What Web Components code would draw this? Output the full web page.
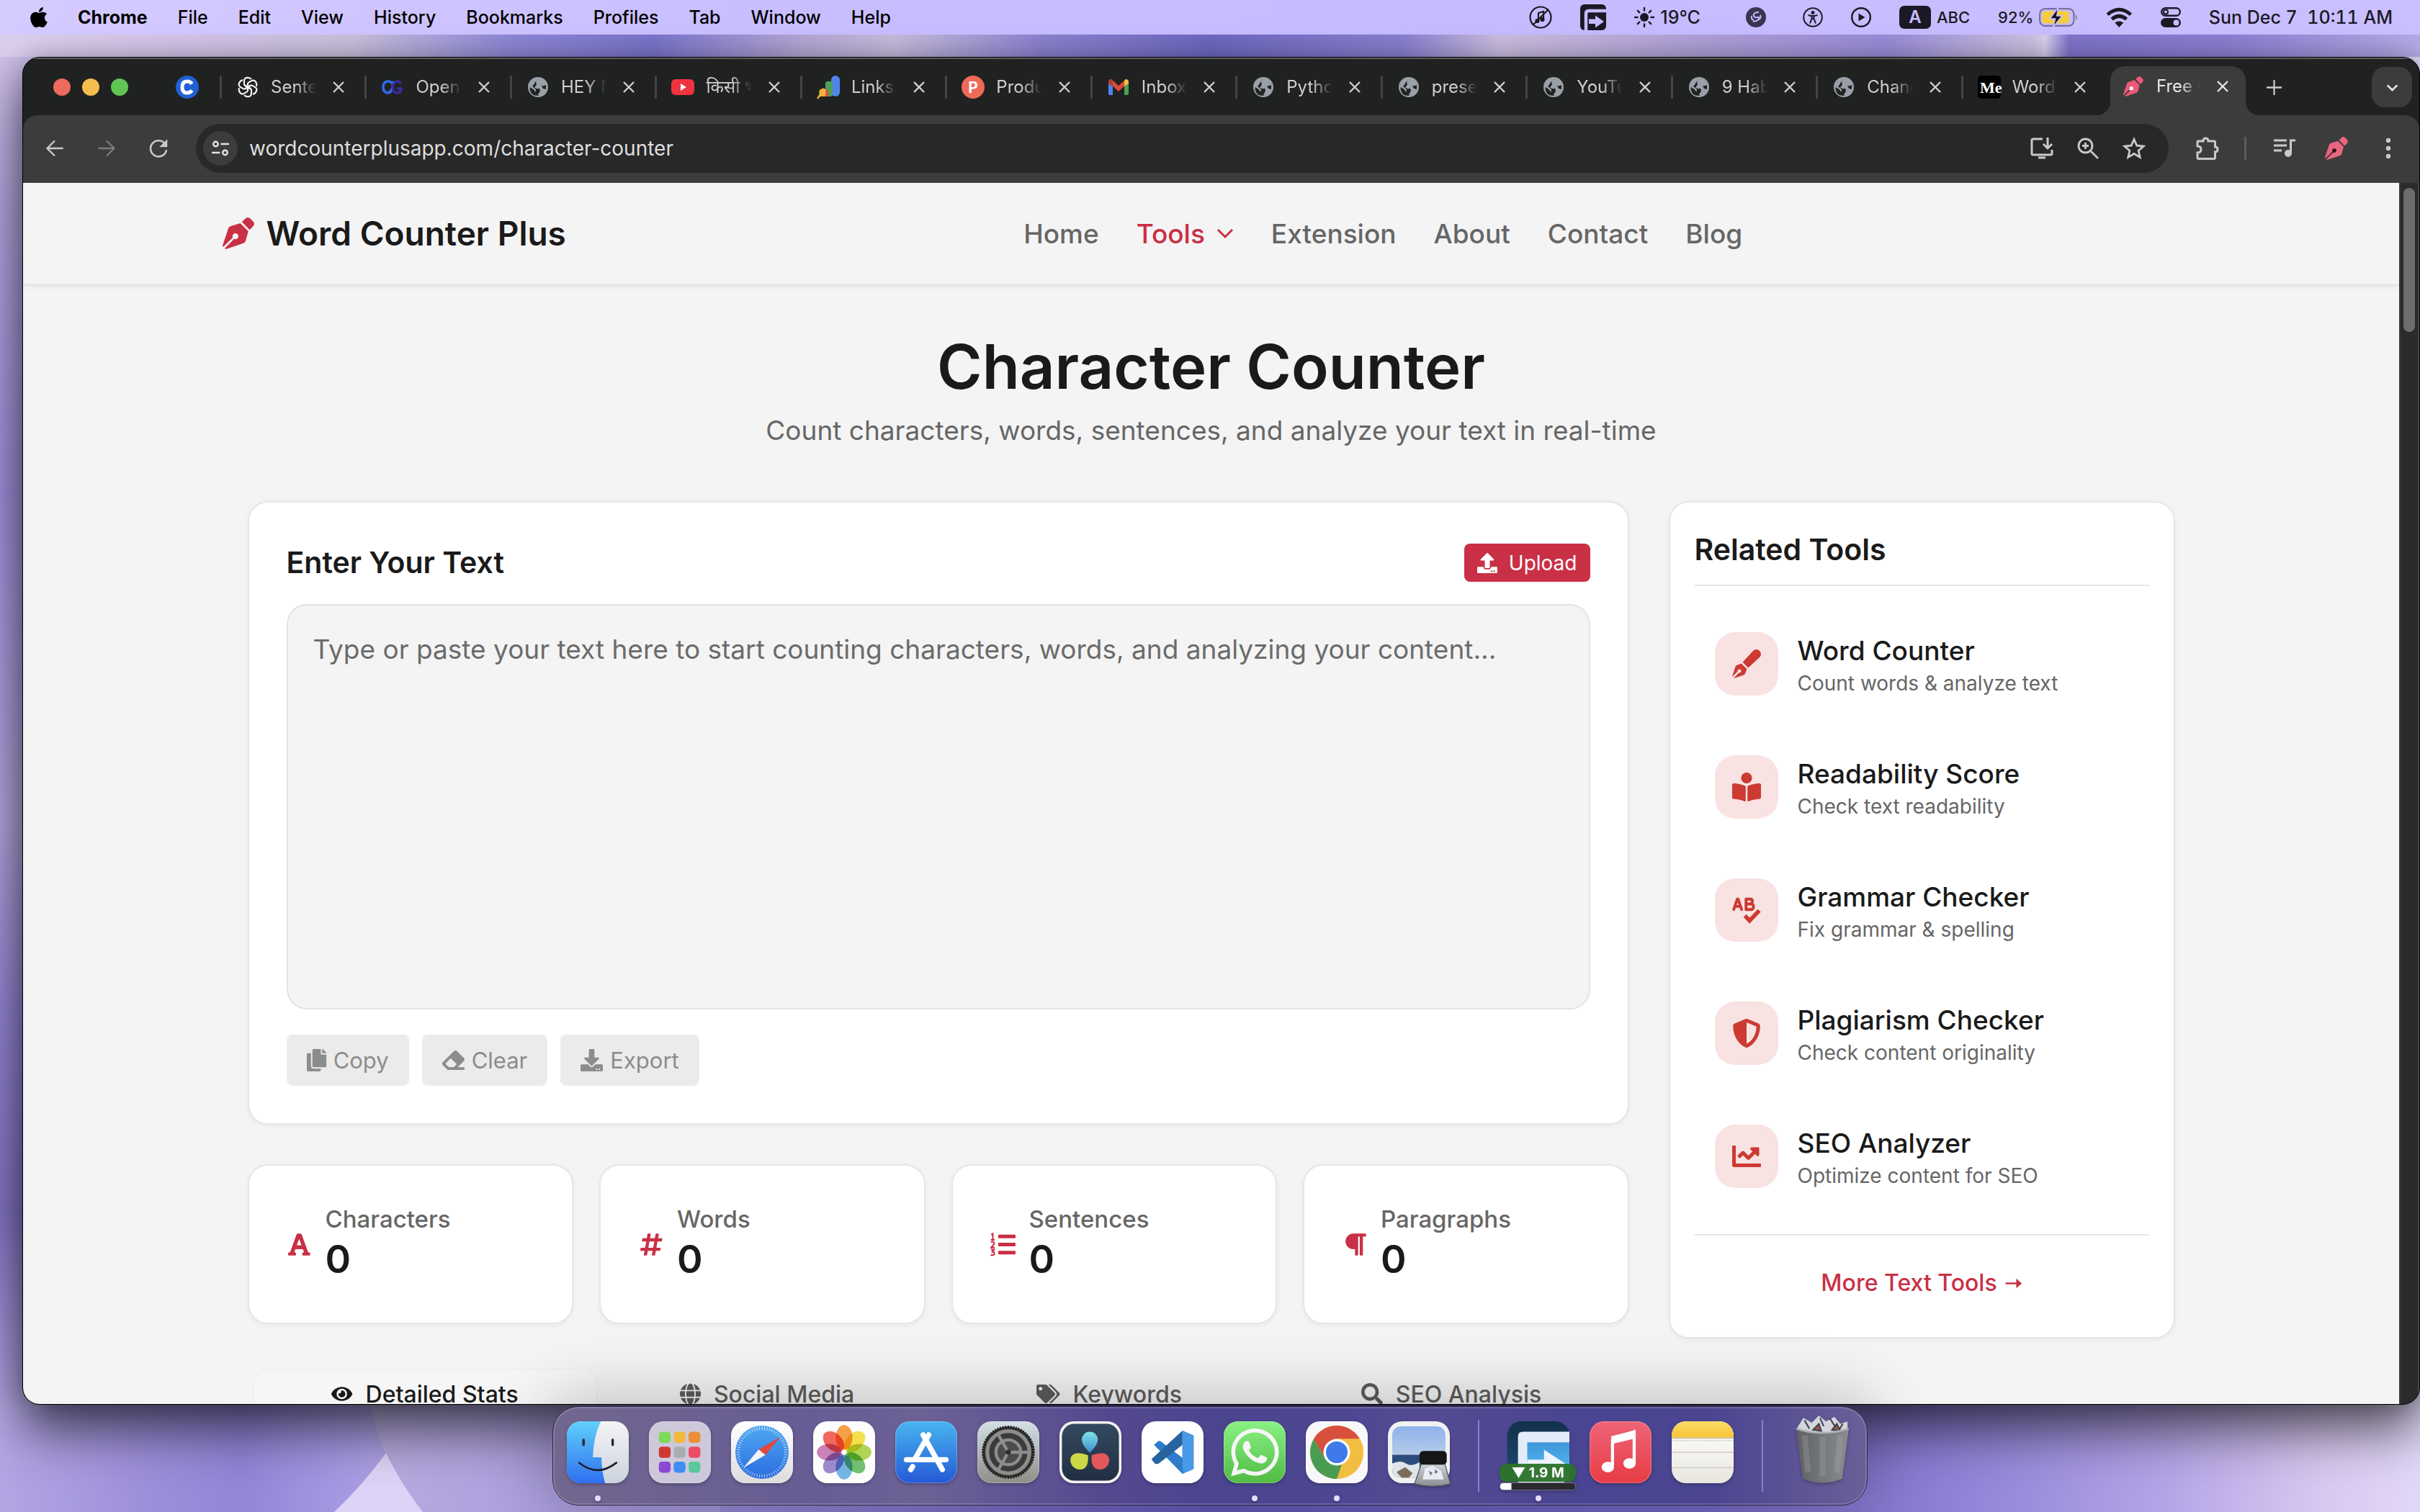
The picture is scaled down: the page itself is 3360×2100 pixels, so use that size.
<!DOCTYPE html>
<html lang="en">
<head>
<meta charset="utf-8">
<title>Free Character Counter</title>
<style>
  html, body { height: 100%; margin: 0; }
  body { font-family: Inter, "Noto Sans", sans-serif; overflow: hidden; }
</style>
</head>
<body>
<mac-desktop>
  <mac-menubar slot="menubar"></mac-menubar>
  <browser-window slot="window">
    <browser-tab slot="tabs" icon="openai">Sentence</browser-tab>
    <browser-tab slot="tabs" icon="og">OpenG</browser-tab>
    <browser-tab slot="tabs" icon="planet">HEY N</browser-tab>
    <browser-tab slot="tabs" icon="youtube">किसी भी</browser-tab>
    <browser-tab slot="tabs" icon="analytics">Links</browser-tab>
    <browser-tab slot="tabs" icon="producthunt">Product</browser-tab>
    <browser-tab slot="tabs" icon="gmail">Inbox (</browser-tab>
    <browser-tab slot="tabs" icon="planet">Python</browser-tab>
    <browser-tab slot="tabs" icon="planet">presen</browser-tab>
    <browser-tab slot="tabs" icon="planet">YouTub</browser-tab>
    <browser-tab slot="tabs" icon="planet">9 Habit</browser-tab>
    <browser-tab slot="tabs" icon="planet">Chang</browser-tab>
    <browser-tab slot="tabs" icon="medium">Word C</browser-tab>
    <browser-tab slot="active" icon="penpink" active>Free C</browser-tab>

    <site-page>
      <site-header slot="header"></site-header>
      <text-editor slot="main"></text-editor>
      <stat-row slot="main">
        <stat-card icon="font" label="Characters">0</stat-card>
        <stat-card icon="hash" label="Words">0</stat-card>
        <stat-card icon="listol" label="Sentences">0</stat-card>
        <stat-card icon="para" label="Paragraphs">0</stat-card>
      </stat-row>
      <analysis-tabs slot="main"></analysis-tabs>
      <related-tools slot="side">
        <tool-link icon="penfancy" label="Word Counter">Count words &amp; analyze text</tool-link>
        <tool-link icon="reader" label="Readability Score">Check text readability</tool-link>
        <tool-link icon="spell" label="Grammar Checker">Fix grammar &amp; spelling</tool-link>
        <tool-link icon="shield" label="Plagiarism Checker">Check content originality</tool-link>
        <tool-link icon="chart" label="SEO Analyzer">Optimize content for SEO</tool-link>
      </related-tools>
    </site-page>
  </browser-window>
  <mac-dock slot="dock">
    <dock-app icon="finder" running></dock-app>
    <dock-app icon="launchpad"></dock-app>
    <dock-app icon="safari"></dock-app>
    <dock-app icon="photos"></dock-app>
    <dock-app icon="appstore"></dock-app>
    <dock-app icon="settings"></dock-app>
    <dock-app icon="resolve"></dock-app>
    <dock-app icon="vscode"></dock-app>
    <dock-app icon="whatsapp" running></dock-app>
    <dock-app icon="chrome" running></dock-app>
    <dock-app icon="preview"></dock-app>
    <dock-rule></dock-rule>
    <dock-app icon="downloader" running badge="1.9 M"></dock-app>
    <dock-app icon="music"></dock-app>
    <dock-app icon="notes"></dock-app>
    <dock-rule></dock-rule>
    <dock-app icon="trash"></dock-app>
  </mac-dock>
</mac-desktop>

<script>
const svg = (box, body, extra = '') => `<svg viewBox="${box}" ${extra}>${body}</svg>`;
const fa = (w, d) => svg(`0 0 ${w} 512`, `<path fill="currentColor" d="${d}"/>`);
const line = (box, body, w = 2) => svg(box, `<g fill="none" stroke="currentColor" stroke-width="${w}">${body}</g>`);
const PEN = 'M368.4 18.3L312.7 74.1 437.9 199.3l55.7-55.7c21.9-21.9 21.9-57.3 0-79.2L447.6 18.3c-21.9-21.9-57.3-21.9-79.2 0zM288 94.6l-9.2 2.8L134.7 140.6c-19.9 6-35.7 21.2-42.3 41L3.8 445.8c-3.8 11.3-1 23.9 7.3 32.4L164.7 324.7c-3-6.3-4.7-13.3-4.7-20.7c0-26.5 21.5-48 48-48s48 21.5 48 48s-21.5 48-48 48c-7.4 0-14.4-1.7-20.7-4.7L33.7 500.9c8.6 8.3 21.1 11.2 32.4 7.3l264.3-88.6c19.7-6.6 35-22.4 41-42.3l43.2-144.1 2.8-9.2L288 94.6z';
const tile = (fill, body, defs = '') => svg('0 0 100 100', `<defs>${defs}</defs><rect width="100" height="100" rx="23" fill="${fill}"/>${body}<rect x=".8" y=".8" width="98.4" height="98.4" rx="22.4" fill="none" stroke="#fff" stroke-opacity=".25" stroke-width="1.2"/>`);
const grad = (id, a, b, dir = 'x1="0" y1="0" x2="0" y2="1"') => `<linearGradient id="${id}" ${dir}><stop stop-color="${a}"/><stop offset="1" stop-color="${b}"/></linearGradient>`;
const ring = (n, cx, cy, r1, r2, attrs) => Array.from({length: n}, (_, i) => {
  const a = i * 2 * Math.PI / n, c = Math.cos(a), s = Math.sin(a);
  return `<path d="M${cx + r1 * c} ${cy + r1 * s}L${cx + r2 * c} ${cy + r2 * s}" ${attrs}/>`;
}).join('');

const ICONS = {
  pen: fa(512, PEN),
  penpink: svg('0 0 512 512', `<circle cx="208" cy="304" r="60" fill="#fff"/><path fill="#ea5a78" d="${PEN}"/>`),
  upload: fa(512, 'M296 384h-80c-13.3 0-24-10.7-24-24V192h-87.7c-17.8 0-26.7-21.5-14.1-34.1L242.3 5.7c7.5-7.5 19.8-7.5 27.3 0l152.2 152.2c12.6 12.6 3.7 34.1-14.1 34.1H320v168c0 13.3-10.7 24-24 24zm216-8v112c0 13.3-10.7 24-24 24H24c-13.3 0-24-10.7-24-24V376c0-13.3 10.7-24 24-24h136v8c0 30.9 25.1 56 56 56h80c30.9 0 56-25.1 56-56v-8h136c13.3 0 24 10.7 24 24zm-124 88c0-11-9-20-20-20s-20 9-20 20 9 20 20 20 20-9 20-20zm64 0c0-11-9-20-20-20s-20 9-20 20 9 20 20 20 20-9 20-20z'),
  download: fa(512, 'M216 0h80c13.3 0 24 10.7 24 24v168h87.7c17.8 0 26.7 21.5 14.1 34.1L269.7 378.3c-7.5 7.5-19.8 7.5-27.3 0L90.1 226.1c-12.6-12.6-3.7-34.1 14.1-34.1H192V24c0-13.3 10.7-24 24-24zm296 376v112c0 13.3-10.7 24-24 24H24c-13.3 0-24-10.7-24-24V376c0-13.3 10.7-24 24-24h146.7l49 49c20.1 20.1 52.5 20.1 72.6 0l49-49H488c13.3 0 24 10.7 24 24zm-124 88c0-11-9-20-20-20s-20 9-20 20 9 20 20 20 20-9 20-20zm64 0c0-11-9-20-20-20s-20 9-20 20 9 20 20 20 20-9 20-20z'),
  copy: fa(448, 'M320 448v40c0 13.255-10.745 24-24 24H24c-13.255 0-24-10.745-24-24V120c0-13.255 10.745-24 24-24h72v296c0 30.879 25.121 56 56 56h168zm0-344V0H152c-13.255 0-24 10.745-24 24v368c0 13.255 10.745 24 24 24h272c13.255 0 24-10.745 24-24V128H344c-13.2 0-24-10.8-24-24zm120.971-31.029L375.029 7.029A24 24 0 0 0 358.059 0H352v96h96v-6.059a24 24 0 0 0-7.029-16.97z'),
  eraser: fa(512, 'M497.941 273.941c18.745-18.745 18.745-49.137 0-67.882l-160-160c-18.745-18.745-49.136-18.746-67.883 0l-256 256c-18.745 18.745-18.745 49.137 0 67.882l96 96A48.004 48.004 0 0 0 144 480h356c6.627 0 12-5.373 12-12v-40c0-6.627-5.373-12-12-12H355.883l142.058-142.059zm-302.627-62.627l137.373 137.373L265.373 416H150.628l-80-80 124.686-124.686z'),
  hash: fa(448, 'M440.667 182.109l7.143-40c1.313-7.355-4.342-14.109-11.813-14.109h-74.81l14.623-81.891C377.123 38.754 371.468 32 363.997 32h-40.632a12 12 0 0 0-11.813 9.891L296.175 128H197.54l14.623-81.891C213.477 38.754 207.822 32 200.35 32h-40.632a12 12 0 0 0-11.813 9.891L132.528 128H53.432a12 12 0 0 0-11.813 9.891l-7.143 40C33.163 185.246 38.818 192 46.289 192h74.81L98.242 320H19.146a12 12 0 0 0-11.813 9.891l-7.143 40C-1.123 377.246 4.532 384 12.003 384h74.81L72.19 465.891C70.877 473.246 76.532 480 84.003 480h40.632a12 12 0 0 0 11.813-9.891L151.826 384h98.634l-14.623 81.891C234.523 473.246 240.178 480 247.65 480h40.632a12 12 0 0 0 11.813-9.891L315.472 384h79.096a12 12 0 0 0 11.813-9.891l7.143-40c1.313-7.355-4.342-14.109-11.813-14.109h-74.81l22.857-128h79.096a12 12 0 0 0 11.813-9.891zM261.889 320h-98.634l22.857-128h98.634l-22.857 128z'),
  font: fa(448, 'M432 416h-23.41L277.53 53.69A32 32 0 0 0 247.58 32h-47.16a32 32 0 0 0-29.95 21.69L39.41 416H16a16 16 0 0 0-16 16v32a16 16 0 0 0 16 16h128a16 16 0 0 0 16-16v-32a16 16 0 0 0-16-16h-19.58l23.3-64h152.56l23.3 64H304a16 16 0 0 0-16 16v32a16 16 0 0 0 16 16h128a16 16 0 0 0 16-16v-32a16 16 0 0 0-16-16zM176.85 272L224 142.51 271.15 272z'),
  listol: svg('0 0 512 512', '<g fill="currentColor"><rect x="160" y="56" width="352" height="72" rx="16"/><rect x="160" y="220" width="352" height="72" rx="16"/><rect x="160" y="384" width="352" height="72" rx="16"/></g><g fill="none" stroke="currentColor" stroke-width="30"><path d="M16 52l34-16v122M10 160h78M14 212q34-28 56 0t-8 48l-44 56h70M14 360h62l-34 44q40 0 40 34t-40 34q-20 0-34-10"/></g>'),
  para: fa(448, 'M448 48v32a16 16 0 0 1-16 16h-48v368a16 16 0 0 1-16 16h-32a16 16 0 0 1-16-16V96h-32v368a16 16 0 0 1-16 16h-32a16 16 0 0 1-16-16V352h-32a160 160 0 0 1 0-320h240a16 16 0 0 1 16 16z'),
  eye: fa(576, 'M572.52 241.4C518.29 135.59 410.93 64 288 64S57.68 135.64 3.48 241.41a32.35 32.35 0 0 0 0 29.19C57.71 376.41 165.07 448 288 448s230.32-71.64 284.52-177.41a32.35 32.35 0 0 0 0-29.19zM288 400a144 144 0 1 1 144-144 143.93 143.93 0 0 1-144 144zm0-240a95.31 95.31 0 0 0-25.31 3.79 47.85 47.85 0 0 1-66.9 66.9A95.78 95.78 0 1 0 288 160z'),
  globe: fa(496, 'M336.5 160C322 70.7 287.8 8 248 8s-74 62.7-88.5 152h177zM152 256c0 22.2 1.2 43.5 3.3 64h185.3c2.1-20.5 3.3-41.8 3.3-64s-1.2-43.5-3.3-64H155.3c-2.1 20.5-3.3 41.8-3.3 64zm324.7-96c-28.6-67.9-86.5-120.4-158-141.6 24.4 33.8 41.2 84.7 50 141.6h108zM177.2 18.4C105.8 39.6 47.8 92.1 19.3 160h108c8.7-56.9 25.5-107.8 49.9-141.6zM487.4 192H372.7c2.1 21 3.3 42.5 3.3 64s-1.2 43-3.3 64h114.6c5.5-20.5 8.6-41.8 8.6-64s-3.1-43.5-8.5-64zM120 256c0-21.5 1.2-43 3.3-64H8.6C3.2 212.5 0 233.8 0 256s3.2 43.5 8.6 64h114.6c-2-21-3.2-42.5-3.2-64zm39.5 96c14.5 89.3 48.7 152 88.5 152s74-62.7 88.5-152h-177zm159.3 141.6c71.4-21.2 129.4-73.7 158-141.6h-108c-8.8 56.9-25.6 107.8-50 141.6zM19.3 352c28.6 67.9 86.5 120.4 158 141.6-24.4-33.8-41.2-84.7-50-141.6h-108z'),
  tags: fa(640, 'M497.941 225.941L286.059 14.059A48 48 0 0 0 252.118 0H48C21.49 0 0 21.49 0 48v204.118a48 48 0 0 0 14.059 33.941l211.882 211.882c18.744 18.745 49.136 18.746 67.882 0l204.118-204.118c18.745-18.745 18.745-49.137 0-67.882zM112 160c-26.51 0-48-21.49-48-48s21.49-48 48-48 48 21.49 48 48-21.49 48-48 48zm513.941 133.823L421.823 497.941c-18.745 18.745-49.137 18.745-67.882 0l-.36-.36L527.64 323.522c16.999-16.999 26.36-39.6 26.36-63.64s-9.362-46.641-26.36-63.64L331.397 0h48.721a48 48 0 0 1 33.941 14.059l211.882 211.882c18.745 18.745 18.745 49.137 0 67.882z'),
  search: fa(512, 'M505 442.7L405.3 343c-4.5-4.5-10.6-7-17-7H372c27.6-35.3 44-79.7 44-128C416 93.1 322.9 0 208 0S0 93.1 0 208s93.1 208 208 208c48.3 0 92.7-16.4 128-44v16.3c0 6.4 2.5 12.5 7 17l99.7 99.7c9.4 9.4 24.6 9.4 33.9 0l28.3-28.3c9.4-9.4 9.4-24.6.1-34zM208 336c-70.7 0-128-57.2-128-128 0-70.7 57.2-128 128-128 70.7 0 128 57.2 128 128 0 70.7-57.2 128-128 128z'),
  penfancy: fa(512, 'M79.18 282.94a32.005 32.005 0 0 0-20.24 20.24L0 480l4.69 4.69 92.89-92.89c-.66-2.56-1.57-5.03-1.57-7.8 0-17.67 14.33-32 32-32s32 14.33 32 32-14.33 32-32 32c-2.77 0-5.24-.91-7.8-1.57l-92.89 92.89L32 512l176.82-58.94a31.983 31.983 0 0 0 20.24-20.24l33.07-84.07-98.88-98.88-84.07 33.07zM369.25 28.32L186.14 227.81l97.85 97.85 199.49-183.11C568.4 67.48 443.73-55.94 369.25 28.32z'),
  reader: fa(512, 'M352 96c0-53.02-42.98-96-96-96s-96 42.98-96 96 42.98 96 96 96 96-42.98 96-96zM233.59 241.1c-59.33-36.32-155.43-46.3-203.79-49.05C13.55 191.13 0 203.51 0 219.14v222.8c0 14.33 11.59 26.28 26.49 27.05 43.66 2.29 131.99 10.68 193.04 41.43 9.37 4.72 20.48-1.71 20.48-11.87V252.56c-.01-4.67-2.32-8.95-6.42-11.46zm248.61-49.05c-48.35 2.74-144.46 12.73-203.78 49.05-4.1 2.51-6.41 6.96-6.41 11.63v245.79c0 10.19 11.14 16.63 20.54 11.9 61.04-30.72 149.32-39.11 192.97-41.4 14.9-.78 26.49-12.73 26.49-27.06V219.14c-.01-15.63-13.56-28.01-29.81-27.09z'),
  shield: fa(512, 'M466.5 83.7l-192-80a48.15 48.15 0 0 0-36.9 0l-192 80C27.7 91.1 16 108.6 16 128c0 198.5 114.5 335.7 221.5 380.3 11.8 4.9 25.1 4.9 36.9 0C360.1 472.6 496 349.3 496 128c0-19.4-11.7-36.9-29.5-44.3zM256.1 446.3l-.1-381 175.9 73.3c-3.3 151.4-82.1 261.1-175.8 307.7z'),
  spell: svg('0 0 512 512', '<g fill="none" stroke="currentColor" stroke-width="56" stroke-linecap="round" stroke-linejoin="round"><path d="M28 246L92 60h12l64 186M56 190h84M246 60h74q40 0 40 40t-40 48h-74zM246 148h90q42 0 42 48t-42 50h-90z" stroke-width="50"/><path d="M226 356l84 88 172-180" stroke-width="72" stroke-linecap="butt" stroke-linejoin="miter"/></g>'),
  chart: fa(512, 'M496 384H64V80c0-8.84-7.16-16-16-16H16C7.16 64 0 71.16 0 80v336c0 17.67 14.33 32 32 32h464c8.84 0 16-7.16 16-16v-32c0-8.84-7.16-16-16-16zM464 96H345.94c-21.38 0-32.09 25.85-16.97 40.97l32.4 32.4L288 242.75l-73.37-73.37c-12.5-12.5-32.76-12.5-45.25 0l-68.69 68.69c-6.25 6.25-6.25 16.38 0 22.63l22.62 22.62c6.25 6.25 16.38 6.25 22.63 0L192 237.25l73.37 73.37c12.5 12.5 32.76 12.5 45.25 0l96-96 32.4 32.4c15.12 15.12 40.97 4.41 40.97-16.97V112c.01-8.84-7.15-16-15.99-16z'),
  apple: fa(384, 'M318.7 268.7c-.2-36.7 16.4-64.4 50-84.8-18.8-26.9-47.2-41.7-84.7-44.6-35.5-2.8-74.3 20.7-88.5 20.7-15 0-49.4-19.7-76.4-19.7C63.3 141.2 4 184.8 4 273.5q0 39.3 14.4 81.2c12.8 36.7 59 126.7 107.2 125.2 25.2-.6 43-17.9 75.8-17.9 31.8 0 48.3 17.9 76.4 17.9 48.6-.7 90.4-82.5 102.6-119.3-65.2-30.7-61.7-90-61.7-91.9zm-56.6-164.2c27.3-32.4 24.8-61.9 24-72.5-24.1 1.4-52 16.4-67.9 34.9-17.5 19.8-27.8 44.3-25.6 71.9 26.1 2 49.9-11.4 69.5-34.3z'),
  chevron: line('0 0 24 24', '<path d="M2 7l10 10L22 7"/>', 3),
  arrow: svg('0 0 32 32', '<path d="M2 16h22" stroke="currentColor" stroke-width="3.200"/><path d="M21 7.500l10 8.500-10 8.500z" fill="currentColor"/>'),

  back: line('0 0 24 24', '<path d="M22 12H3M12 3l-9 9 9 9"/>'),
  forward: line('0 0 24 24', '<path d="M2 12h19M12 3l9 9-9 9"/>'),
  reload: svg('0 0 24 24', '<path d="M20 7a9.500 9.500 0 1 0 1.500 7" fill="none" stroke="currentColor" stroke-width="2.200"/><path d="M22.500 1v9.500H13z" fill="currentColor"/>'),
  tune: line('0 0 24 24', '<circle cx="6" cy="6.500" r="3"/><path d="M12.500 6.500H23M1 17.500h10.500"/><circle cx="18" cy="17.500" r="3"/>', 2.2),
  install: line('0 0 32 32', '<path d="M17 3H4q-2 0-2 2v18q0 2 2 2h24q2 0 2-2v-5M11 29h10M24 1v14M18 10l6 6 6-6" />', 3),
  zoomin: line('0 0 32 32', '<circle cx="12.500" cy="12.500" r="9.500"/><path d="M20 20l10 10M12.500 8v9M8 12.500h9"/>', 2.8),
  star: line('0 0 32 32', '<path d="M16 3.500l3.800 8.600 9.400.9-7.100 6.200 2.100 9.200L16 23.500l-8.200 4.900 2.100-9.200L2.800 13l9.400-.9z"/>', 2.8),
  puzzle: line('0 0 32 32', '<path d="M4 6h7q0-4 3.500-4T18 6h8q1.500 0 1.500 1.500V14q3.500 0 3.500 3.500T27.500 21v8q0 1.500-1.500 1.500H4Q3 30 3 29v-7q5 0 5-4.500T3 13V7q0-1 1-1z"/>', 3),
  playlist: svg('0 0 32 32', '<path d="M1 5h18M1 12h18M1 19h11" fill="none" stroke="currentColor" stroke-width="3"/><circle cx="21" cy="23" r="5" fill="currentColor"/><path d="M24.500 23V5H31" fill="none" stroke="currentColor" stroke-width="3"/>'),
  pentool: svg('0 0 512 512', `<circle cx="208" cy="304" r="48" fill="#33161d"/><path fill="#ea6581" d="${PEN}"/>`),
  dots: svg('0 0 32 32', '<g fill="currentColor"><circle cx="16" cy="5" r="3.200"/><circle cx="16" cy="16" r="3.200"/><circle cx="16" cy="27" r="3.200"/></g>'),
  close: line('0 0 16 16', '<path d="M1 1l14 14M15 1L1 15"/>', 2.4),
  plus: line('0 0 20 20', '<path d="M10 0v20M0 10h20"/>', 2.2),
  drop: line('0 0 20 20', '<path d="M3.500 7l6.500 6.500L16.500 7"/>', 2.6),

  cbrand: svg('0 0 32 32', '<circle cx="16" cy="16" r="16" fill="#2160d2"/><path d="M22.500 11.500q-2.500-3.500-6.500-3.500-7 0-7 8t7 8q4 0 6.500-3.500" fill="none" stroke="#fff" stroke-width="5"/>'),
  openai: svg('0 0 32 32', `<g fill="none" stroke="#f2f2f2" stroke-width="2.200" stroke-linejoin="round">${[0, 60, 120, 180, 240, 300].map(a => `<path transform="rotate(${a} 16 16)" d="M11 13V7.500q0-4.700 5-4.700 3 0 5 2.200M11 13l9.500 5.500"/>`).join('')}</g>`),
  og: svg('0 0 32 32', '<g fill="none" stroke-width="3.600"><path d="M16 11Q13 7.500 9 8q-6 1-6 8t6 8q5 0 7-8l1-8" stroke="#2f6be8"/><path d="M28 11q-3-3.500-6-3-4 .5-6 8 1 8 7 8 5 0 5-6h-6" stroke="#3d2a9e"/></g>'),
  planet: svg('0 0 32 32', '<circle cx="16" cy="16" r="14" fill="#9aa0a8"/><path d="M17 4.500l-4 4 1 4-3 4 4 2 3-1 1 4-3 5 1.500 1Q10 29 6.500 24 4 20 4.500 16l5 3 3 4 .5-4-5-4q3-3 4-6zM21 14q3 1 6-1v6l-4-1z" fill="#202322"/>'),
  youtube: svg('0 0 32 32', '<rect y="5" width="32" height="22" rx="6" fill="#ef3340"/><path d="M13 11l8 5-8 5z" fill="#fff"/>'),
  analytics: svg('0 0 32 32', '<rect x="20" width="12" height="29" rx="6" fill="#5084ec"/><rect x="12" y="8" width="10" height="21" rx="3" fill="#4d9f57"/><path d="M4 20q6-5 9 0v9H5q-3-4-1-9z" fill="#efb03c"/><path d="M1 32l7-10" stroke="#efb03c" stroke-width="2.500"/><path d="M13 18l3 3v8h-4z" fill="#dd4b3e"/>'),
  producthunt: svg('0 0 32 32', '<circle cx="16" cy="16" r="16" fill="#ee6a58"/><text x="16" y="23.500" font-size="21" font-weight="700" text-anchor="middle" fill="#fff" font-family="Inter">P</text>'),
  gmail: svg('0 0 32 32', '<path d="M2 9h6v18H4q-2 0-2-2z" fill="#5084ec"/><path d="M24 9h6v16q0 2-2 2h-4z" fill="#4d9f57"/><path d="M2 9q0-4 4-4l10 9L26 5q-1 0 0 0l4 4-14 13z" fill="#db4a3d"/><path d="M2 9q0-4 4-4l2 2v8l-6-4z" fill="#b73b30"/><path d="M30 9q0-4-4-4l-2 2v8l6-4z" fill="#f2bd42"/>'),
  medium: svg('0 0 32 32', '<rect width="32" height="32" rx="5" fill="#000"/><text x="3" y="24" font-size="22" font-weight="700" fill="#fff" font-family="Liberation Serif">Me</text>'),

  nomusic: line('0 0 32 32', '<circle cx="16" cy="16" r="14.500"/><path d="M5 27L27 5" /><path d="M13 21V10l7-2v10"/><circle cx="11.500" cy="21" r="2" fill="currentColor"/><circle cx="18.500" cy="19" r="2" fill="currentColor"/>', 2.2),
  squarearrow: svg('0 0 36 36', '<rect width="36" height="36" rx="6" fill="currentColor"/><path d="M8 36V13q0-4 4-4h24" fill="none" stroke="#c6bcff" stroke-width="4.500"/><path d="M12 20.500h9v-5l12 8.500-12 8.500V27h-9z" fill="#c6bcff"/>'),
  sun: svg('0 0 28 28', `<circle cx="14" cy="14" r="6" fill="currentColor"/>${ring(8, 14, 14, 9.5, 13, 'stroke="currentColor" stroke-width="2.400" stroke-linecap="round"')}`),
  swirl: svg('0 0 28 28', '<circle cx="14" cy="14" r="14" fill="#3a3550"/><path d="M18 7q-8 0-7 5 1 3 5 2 3-1 2 2t-8 4M8 12q-1 5 3 6M20 11q2 4-2 6" fill="none" stroke="#c6bcff" stroke-width="2"/>'),
  access: line('0 0 28 28', '<circle cx="14" cy="14" r="12.800"/><circle cx="14" cy="7.500" r="1.500" fill="currentColor"/><path d="M7.500 11l5 1.200v4L10 22.500M20.500 11l-5 1.200v4l2.500 6.300M12.500 12h3v4h-3z"/>', 2),
  play: svg('0 0 28 28', '<circle cx="14" cy="14" r="12.800" fill="none" stroke="currentColor" stroke-width="2.400"/><path d="M10.500 8.500v11l9-5.500z" fill="currentColor"/>'),
  battery: svg('0 0 50 26', '<rect x="1" y="2" width="44" height="22" rx="7" fill="none" stroke="#76709c" stroke-width="2"/><rect x="4" y="5" width="35" height="16" rx="4" fill="#f6cc3e"/><path d="M47.500 9v8q3-4 0-8z" fill="#76709c"/><path d="M25 0L14 15h7l-3 11 12-15h-7z" fill="#14121f" stroke="#c6bcff" stroke-width="1.500"/>'),
  wifi: svg('0 0 34 26', '<path d="M2 9.500Q17-3.500 32 9.500M7.500 15.500q9.500-8 19 0" fill="none" stroke="currentColor" stroke-width="4.500"/><path d="M17 26l-5.500-6q5.500-4 11 0z" fill="currentColor"/>'),
  control: svg('0 0 28 28', '<rect x="1.200" y="1.200" width="25.600" height="10.600" rx="5.300" fill="none" stroke="currentColor" stroke-width="2.400"/><circle cx="7" cy="6.500" r="3" fill="none" stroke="currentColor" stroke-width="2"/><rect y="15" width="28" height="13" rx="6.500" fill="currentColor"/><circle cx="21.500" cy="21.500" r="4" fill="#c6bcff"/>'),

  finder: svg('0 0 100 100', `<defs>${grad('a', '#5fd0fa', '#2f6ff0')}${grad('b', '#f4f4f6', '#ccd3de')}<clipPath id="c"><rect width="100" height="100" rx="23"/></clipPath></defs><g clip-path="url(#c)"><rect width="100" height="100" fill="url(#b)"/><path d="M0 0h55Q43 24 42 58h14q0 22 6 42H0z" fill="url(#a)"/></g><path d="M27 30v8M74 30v8" stroke="#2a2a33" stroke-width="4" stroke-linecap="round"/><path d="M20 67q29 24 60 0" fill="none" stroke="#1d1d24" stroke-width="3" stroke-linecap="round"/>`),
  launchpad: tile('#cdc9db', ['#7fd95a', '#f2b93c', '#eb8f38', '#cf3a30', '#a9adb3', '#ee4b66', '#8c48d2', '#3f8df2', '#5bc79a'].map((c, i) => `<rect x="${16 + i % 3 * 24}" y="${17 + Math.floor(i / 3) * 24}" width="19" height="18" rx="5" fill="${c}"/>`).join('')),
  safari: tile('url(#a)', `<circle cx="50" cy="50" r="43" fill="url(#b)"/>${ring(60, 50, 50, 36, 41, 'stroke="#fff" stroke-opacity=".85" stroke-width="1"')}<path d="M80 25L55.500 54.500 44.500 45.500z" fill="#e2483e"/><path d="M20 75l24.500-29.500 11 9z" fill="#f4f4f4"/>`, grad('a', '#ffffff', '#dcdcdc') + grad('b', '#4fa9f3', '#2a6cdf')),
  photos: tile('#fdfdfd', `<g style="isolation:isolate">${['#f5983b', '#f3dc3e', '#a9d145', '#66b966', '#69ace0', '#9480c8', '#c678b0', '#ee5a50'].map((c, i) => `<ellipse cx="50" cy="26" rx="13.500" ry="20" fill="${c}" fill-opacity=".92" style="mix-blend-mode:multiply" transform="rotate(${i * 45} 50 50)"/>`).join('')}</g>`),
  appstore: tile('url(#a)', '<g stroke="#fff" stroke-width="8.500" stroke-linecap="round"><path d="M54 22L31 62M45 22l31 56M18 62h64M28 73l-3 5"/></g>', grad('a', '#48b5f0', '#2459d6')),
  settings: tile('url(#a)', `<circle cx="50" cy="50" r="42" fill="#3b3b3b"/>${ring(60, 50, 50, 38, 43, 'stroke="#1d1d1d" stroke-width="2"')}<circle cx="50" cy="50" r="34" fill="none" stroke="#8d8d8b" stroke-width="6"/><circle cx="50" cy="50" r="20" fill="#4a4a48" stroke="#8d8d8b" stroke-width="5"/><path d="M50 50h32M50 50L34 22M50 50L34 78" stroke="#8d8d8b" stroke-width="5"/><circle cx="50" cy="50" r="4" fill="#2a2a2a"/>`, grad('a', '#d3e0e6', '#8f8d87')),
  resolve: tile('#f1f1f1', '<rect x="4" y="4" width="92" height="92" rx="20" fill="url(#a)"/><path d="M49 51Q36 38 36 30a13 13 0 0 1 26 0q0 8-13 21z" fill="url(#b)"/><path d="M46 55q2 23-14 23a15 15 0 0 1-13-21q6-10 27-2z" fill="#cdd845"/><path d="M52 55q-2 23 14 23a15 15 0 0 0 13-21q-6-10-27-2z" fill="#e4575a"/>', grad('a', '#34495f', '#222f42') + grad('b', '#7fe4e4', '#3f8ad0')),
  vscode: tile('#ffffff', '<path d="M66 15l18 8v54l-18 8L20 38l7-6q3-1 5 1l34 26z" fill="#2f7ccb"/><path d="M66 15L16 61l5 7q4 2 7 0l38-30z" fill="#27649f"/><path d="M66 15l18 8v54l-18 8q2-2 0-10V25q1-8 0-10z" fill="#4899e6"/>'),
  whatsapp: tile('url(#a)', '<path transform="translate(12 6) scale(.172)" fill="#f6f6f6" d="M380.9 97.1C339 55.1 283.2 32 223.9 32c-122.4 0-222 99.6-222 222 0 39.1 10.2 77.3 29.6 111L0 480l117.700-30.900c32.400 17.700 68.900 27 106.100 27h.1c122.300 0 224.100-99.600 224.100-222 0-59.300-25.200-115-67.100-157zm-157 341.600c-33.200 0-65.700-8.900-94-25.700l-6.700-4-69.800 18.300L72 359.200l-4.400-7c-18.500-29.400-28.200-63.300-28.200-98.200 0-101.700 82.800-184.500 184.600-184.500 49.300 0 95.600 19.200 130.400 54.100 34.800 34.900 56.200 81.200 56.100 130.500 0 101.800-84.900 184.600-186.600 184.600zm101.200-138.200c-5.500-2.800-32.800-16.200-37.900-18-5.100-1.900-8.800-2.800-12.500 2.800-3.700 5.600-14.300 18-17.600 21.800-3.200 3.700-6.500 4.200-12 1.400-32.600-16.300-54-29.100-75.500-66-5.700-9.800 5.700-9.100 16.300-30.300 1.800-3.700.9-6.900-.5-9.700-1.400-2.800-12.500-30.100-17.100-41.200-4.500-10.800-9.100-9.300-12.500-9.500-3.200-.2-6.900-.2-10.600-.2-3.700 0-9.700 1.400-14.800 6.900-5.100 5.600-19.400 19-19.400 46.300 0 27.300 19.900 53.700 22.600 57.400 2.800 3.700 39.100 59.700 94.800 83.800 35.200 15.200 49 16.500 66.600 13.900 10.700-1.600 32.800-13.400 37.400-26.400 4.600-13 4.600-24.100 3.200-26.400-1.300-2.500-5-3.900-10.500-6.600z"/>', grad('a', '#8af184', '#51bb45')),
  chrome: tile('#f8f8fa', '<circle cx="50" cy="50" r="43" fill="#f2be42"/><path d="M12.800 28.500A43 43 0 0 1 87.200 28.500H50L31.400 60.700z" fill="#d94f3d"/><path d="M12.800 28.500A43 43 0 0 0 50 93l18.600-32.200H31.400z" fill="#4a9c53"/><path d="M68.600 39.300L50 93A43 43 0 0 0 87.200 28.500H50z" fill="#f2be42"/><circle cx="50" cy="50" r="21.500" fill="#fff"/><circle cx="50" cy="50" r="17.500" fill="#3f7be8"/>'),
  preview: svg('0 0 100 100', `<defs>${grad('a', '#8db2ea', '#b7cbea')}${grad('b', '#cfd2d6', '#8a8d92')}</defs><rect width="100" height="100" rx="23" fill="#f1f1f1"/><path d="M7 54V24q0-16 16-16h54q16 0 16 16v30z" fill="url(#a)"/><path d="M7 54h86v37H23Q7 91 7 77z" fill="#2c4c7c"/><path d="M7 68q14-6 22 0t22-2v25H23Q7 91 7 77z" fill="#dfe6ea"/><path d="M14 82l14-8 12 10-6 7H22z" fill="#7d6c5c"/><path d="M54 69h38l9 32q-28 8-58 0z" fill="url(#b)" stroke="#555" stroke-width="1.500"/><rect x="51" y="48" width="44" height="22" rx="6" fill="#161616"/><path d="M60 76l12-4 14 8 4 14H56z" fill="#e9ecf2"/><path d="M66 80l6 3-3 5zM76 77l5 5-5 3z" fill="#68748c"/>`),
  downloader: svg('0 0 100 100', `<defs>${grad('a', '#12304c', '#1d4f70')}${grad('b', '#3d95da', '#58bdf0')}</defs><rect width="100" height="100" rx="23" fill="url(#a)"/><path d="M17 96V24q0-7 8-7h75v66q0 17-17 17H17z" fill="#e3ecf9"/><path d="M32 34h68v50H32z" fill="url(#b)"/><path d="M32 62h27V46l34 22v14H32z" fill="#eef4fd"/>`),
  music: tile('url(#a)', '<path d="M36 27l36-10v49" fill="none" stroke="#fff" stroke-width="5"/><path d="M35 24l38-9v13l-38 9z" fill="#fff"/><path d="M37 30v42" stroke="#fff" stroke-width="5"/><ellipse cx="29.500" cy="74" rx="10" ry="8.500" fill="#fff"/><ellipse cx="64.500" cy="68" rx="10" ry="8.500" fill="#fff"/>', grad('a', '#ee6478', '#e73c44')),
  notes: svg('0 0 100 100', `<defs>${grad('a', '#ffffff', '#e8e6df')}${grad('b', '#fbdc68', '#f7c437')}<clipPath id="c"><rect width="100" height="100" rx="23"/></clipPath></defs><g clip-path="url(#c)"><rect width="100" height="100" fill="url(#a)"/><rect width="100" height="26" fill="url(#b)"/><path d="M0 27h100" stroke="#a58b3c"/><path d="M0 31h100" stroke="#b9b9b9" stroke-width="2" stroke-dasharray="1.500 2"/><path d="M0 50h100M0 75h100" stroke="#cfccc6" stroke-width="1.500"/></g>`),
  trash: svg('0 0 100 116', `<defs>${grad('a', '#5f6163', '#8a8d8f', 'x1="0" y1="0" x2="1" y2="0"')}</defs><path d="M8 20L18 4l14 8L44 0l12 10L70 2l10 12 12-4v14L80 34H18z" fill="#d3d5da"/><path d="M20 8l8 14M62 4l10 16M34 24l10-10 4 12zM66 24l8-10 6 12zM46 4l6 14M84 14l-6 10" stroke="#3c4048" stroke-width="2.500" fill="#9b5848"/><path d="M6 22q44 14 88 0L83 106q-33 14-66 0z" fill="url(#a)"/><path d="M20 34l6 62M50 36v66M80 34l-6 62" stroke="#b9bcbf" stroke-opacity=".22" stroke-width="10"/><path d="M6 22q44 14 88 0" fill="none" stroke="#aeb1b4" stroke-width="3"/>`)
};

/* Registers an element whose shadow root is cloned from a template. */
function define(tag, css, html) {
  customElements.define(tag, class extends HTMLElement {
    constructor() { super(); this.attachShadow({ mode: 'open' }); }
    connectedCallback() {
      if (this.shadowRoot.firstChild) return;
      const t = document.createElement('template');
      const body = typeof html === 'function' ? html(this) : html;
      t.innerHTML = `<style>*,:host{box-sizing:border-box}a{color:inherit;text-decoration:none}button{font:inherit;color:inherit;border:0;background:none;padding:0;margin:0}h1,h2,h3,p{margin:0}${css}</style>${body}`;
      this.shadowRoot.append(t.content.cloneNode(true));
    }
  });
}

define('ui-icon', ':host{display:inline-flex;flex:none;height:1em}svg{height:100%;width:auto;display:block;overflow:visible}',
  el => ICONS[el.getAttribute('name')]);

define('mac-desktop', `
  :host { display:flex; flex-direction:column; height:100vh; position:relative; overflow:hidden;
    background:
      linear-gradient(90deg, #dccfee 0, #d3c3e8 8%, #c9c0dc 14.500%, #8e87d6 21%, #7a74cb 27%, #b3a5d4 33%, #c5bbdc 37%, #8c82cf 43%, #6d68c0 50%, #8a7fd0 58%, #cabddf 62%, #b0a0d8 70%, #9a8cd8 78%, #c9c0e0 84%, #d9cfee 84.500%, #8074cb 85.500%, #8b7fd2 92%, #b6aae6 100%) 0 0 / 100% 79px no-repeat,
      linear-gradient(180deg, #d6c8ec 0, #b3a3dd 15%, #a08fdc 35%, #b4a4dc 58%, #9484d4 72%, #8474c4 86%, #b3a6e3 100%) 0 0 / 60px 1960px no-repeat,
      linear-gradient(90deg, #b3a6e3 0, #9e8fdb 6%, #9385d8 10%, #a598e2 14%, #c0b4e6 20%, #a294dc 25%, #6458b8 50%, #7468c4 70%, #8c7fd6 80%, #b2a2e6 89%, #d9c8f0 96%, #e2d8f8 100%); }
  .shape { position:absolute; left:0; bottom:0; width:1000px; height:200px; }
  .window { flex:1; min-height:0; display:flex; margin:31px 0 149px 31px; position:relative; }
  ::slotted([slot=window]) { flex:1; }
  .dock { position:absolute; left:0; right:0; bottom:9px; display:flex; justify-content:center; }`,
  `<svg class="shape" viewBox="0 0 1000 200"><defs>${grad('a', '#b7abdf', '#a294dc', 'x1="0" y1="0" x2="1" y2="0"')}</defs><path d="M508 30Q522 90 536 118 556 160 587 200H1000V30z" fill="url(#a)"/><path d="M536 118Q504 162 464 200H587Q556 160 536 118z" fill="#ddd3f6"/></svg>
  <slot name="menubar"></slot><div class="window"><slot name="window"></slot></div><div class="dock"><slot name="dock"></slot></div>`);

define('mac-menubar', `
  :host { display:flex; justify-content:space-between; align-items:center; height:48px; padding:0 38px 0 42px; font-size:25px; line-height:48px; font-weight:500; color:#000;
    background:linear-gradient(90deg,#d6cbff 0,#c9bfff 30%,#c5bbff 60%,#cabfff 100%); white-space:pre; }
  nav, .status, .pair { display:flex; align-items:center; }
  nav { gap:42px; } nav b { font-weight:700; }
  .status { gap:39px; color:#1c1926; font-weight:500; }
  .clock { font-variant-numeric:tabular-nums; }
  .pair { gap:8px; } .wide { margin-right:12px; } .wider { margin-right:24px; }
  .apple { font-size:32px; } .s28 { font-size:28px; } .s32 { font-size:32px; } .s36 { font-size:36px; }
  .small { font-size:22px; }
  .key { display:block; width:44px; height:32px; line-height:32px; border-radius:7px; background:#1c1926; color:#c6bcff; text-align:center; font-weight:600; font-size:24px; }`,
  `<nav><ui-icon name="apple" class="apple"></ui-icon><b>Chrome</b>${['File', 'Edit', 'View', 'History', 'Bookmarks', 'Profiles', 'Tab', 'Window', 'Help'].map(t => `<span>${t}</span>`).join('')}</nav>
  <div class="status"><ui-icon name="nomusic" class="s32"></ui-icon><ui-icon name="squarearrow" class="s36"></ui-icon>
  <span class="pair wider"><ui-icon name="sun" class="s28"></ui-icon><span>19°C</span></span>
  <ui-icon name="swirl" class="s28 wide"></ui-icon><ui-icon name="access" class="s28"></ui-icon><ui-icon name="play" class="s28"></ui-icon>
  <span class="pair"><span class="key">A</span><span class="small">ABC</span></span>
  <span class="pair"><span class="small">92%</span><ui-icon name="battery" class="s28"></ui-icon></span>
  <ui-icon name="wifi" class="s28"></ui-icon><ui-icon name="control" class="s28"></ui-icon><span class="clock">Sun Dec 7  10:11 AM</span></div>`);

define('browser-window', `
  :host { display:flex; flex-direction:column; min-width:0; border:1px solid #000; border-radius:24px; overflow:hidden; background:#1f2221; color:#c9c9c9; position:relative;
    box-shadow:0 36px 70px rgba(0,0,0,.62), 0 0 30px rgba(0,0,0,.2); }
  .strip { display:flex; align-items:center; height:80px; border-top:2px solid #5d5d5d; padding:0 10px 0 42px; }
  .lights { display:flex; gap:16px; margin-right:66px; } .lights i { width:24px; height:24px; border-radius:50%; }
  .pin { font-size:32px; margin-right:29px; }
  .tabs { flex:1; min-width:0; display:flex; }
  .current { align-self:flex-end; width:188px; margin-left:6px; }
  .plus { width:40px; height:40px; margin:0 116px 0 19px; font-size:21px; display:grid; place-items:center; }
  .list { width:56px; height:56px; border-radius:18px; background:#3c3c3c; font-size:21px; display:grid; place-items:center; color:#e3e3e3; }
  .bar { display:flex; align-items:center; height:94px; padding:0 7px 2px 8px; background:#3c3c3c; border-radius:20px 20px 0 0; }
  .bar > button { width:72px; height:56px; font-size:28px; display:grid; place-items:center; }
  .bar > .off { color:#7b7b7b; }
  .bar > .big { font-size:32px; }
  .omni { flex:1; display:flex; align-items:center; height:68px; margin:0 17px 0 16px; padding:0 16px 0 10px; border-radius:34px; background:#282828; }
  .omni button { width:64px; height:48px; font-size:32px; display:grid; place-items:center; }
  .omni .info { width:48px; border-radius:50%; background:#3c3c3c; font-size:26px; margin-right:16px; color:#e3e3e3; }
  input { flex:1; border:0; padding:0; background:none; outline:0; font:400 28px/40px Inter, sans-serif; color:#dedede; }
  .rule { width:3px; height:32px; background:#5c5c5c; margin:0 17px 0 16px; }
  .view { flex:1; min-height:0; display:flex; }
  .view slot { display:block; flex:1; min-width:0; overflow:hidden; background:#f4f4f4; }
  .scroll { width:28px; background:#2b2b2b; border-right:2px solid #474747; border-left:2px solid #3a3a3a; padding:7px 4px; }
  .scroll i { display:block; height:200px; border-radius:8px; background:#6d6d6d; }`,
  `<div class="strip"><div class="lights"><i style="background:#ec6a5e"></i><i style="background:#f4be4f"></i><i style="background:#61c554"></i></div>
   <ui-icon name="cbrand" class="pin"></ui-icon><div class="tabs"><slot name="tabs"></slot></div><div class="current"><slot name="active"></slot></div>
   <button class="plus" aria-label="New tab"><ui-icon name="plus"></ui-icon></button><button class="list" aria-label="Search tabs"><ui-icon name="drop"></ui-icon></button></div>
   <div class="bar"><button aria-label="Back"><ui-icon name="back"></ui-icon></button><button class="off" aria-label="Forward"><ui-icon name="forward"></ui-icon></button><button aria-label="Reload"><ui-icon name="reload"></ui-icon></button>
   <div class="omni"><button class="info" aria-label="Site information"><ui-icon name="tune"></ui-icon></button><input aria-label="Address" value="wordcounterplusapp.com/character-counter">
   <button aria-label="Install"><ui-icon name="install"></ui-icon></button><button aria-label="Zoom"><ui-icon name="zoomin"></ui-icon></button><button aria-label="Bookmark"><ui-icon name="star"></ui-icon></button></div>
   <button class="big" aria-label="Extensions"><ui-icon name="puzzle"></ui-icon></button><i class="rule"></i><button class="big" aria-label="Media"><ui-icon name="playlist"></ui-icon></button><button class="big" aria-label="Word Counter Plus"><ui-icon name="pentool"></ui-icon></button><button class="big" aria-label="Menu"><ui-icon name="dots"></ui-icon></button></div>
   <div class="view"><slot></slot><div class="scroll"><i></i></div></div>`);

define('browser-tab', `
  :host { display:flex; align-items:center; flex:1; min-width:0; height:32px; border-left:3px solid #434544; padding:0 28px 0 20px; font-size:24px; line-height:32px; color:#cfcfcf; }
  :host([active]) { height:68px; padding:0 24px 12px 18px; border:0; border-radius:20px 20px 0 0; background:#3c3c3c; color:#e8e8e8; position:relative; }
  :host([active])::before, :host([active])::after { content:""; position:absolute; bottom:0; width:20px; height:20px; }
  :host([active])::before { left:-20px; background:radial-gradient(circle at 0 0, transparent 20px, #3c3c3c 21px); }
  :host([active])::after { right:-20px; background:radial-gradient(circle at 100% 0, transparent 20px, #3c3c3c 21px); }
  .icon { font-size:32px; margin-right:16px; }
  :host([active]) .icon { font-size:28px; margin-right:18px; }
  .t { flex:1; min-width:0; overflow:hidden; white-space:nowrap; -webkit-mask-image:linear-gradient(90deg,#000 55%,transparent 98%); mask-image:linear-gradient(90deg,#000 55%,transparent 98%); }
  button { font-size:16px; display:grid; margin-left:22px; }`,
  el => `<ui-icon class="icon" name="${el.getAttribute('icon')}"></ui-icon><span class="t"><slot></slot></span><button aria-label="Close tab"><ui-icon name="close"></ui-icon></button>`);

define('site-page', `
  :host { display:block; color:#1a1a1a; }
  main { max-width:2676px; margin:0 auto; padding-top:63px; }
  .hero { text-align:center; margin-bottom:70px; }
  h1 { font-size:85px; line-height:100px; font-weight:600; }
  .hero p { font-size:37px; line-height:56px; margin-top:10px; color:#666; }
  .cols { display:grid; grid-template-columns:minmax(0,1fr) 703px; gap:55px; align-items:start; }
  .main { display:flex; flex-direction:column; gap:55px; min-width:0; }`,
  `<slot name="header"></slot><main><div class="hero"><h1>Character Counter</h1><p>Count characters, words, sentences, and analyze your text in real-time</p></div>
   <div class="cols"><div class="main"><slot name="main"></slot></div><slot name="side"></slot></div></main>`);

define('site-header', `
  :host { display:block; border-bottom:3px solid #e6e6e6; box-shadow:0 2px 8px rgba(0,0,0,.05); }
  .in { max-width:2746px; height:140px; margin:0 auto; display:flex; justify-content:space-between; align-items:center; }
  .brand { display:flex; align-items:center; gap:17px; font-size:46px; font-weight:600; }
  .brand ui-icon { font-size:44px; color:#c93045; }
  nav { display:flex; gap:52px; font-size:37px; font-weight:500; color:#666; }
  .on { color:#c93045; display:flex; align-items:center; gap:16px; } .on ui-icon { font-size:24px; }`,
  `<div class="in"><a class="brand" href="#"><ui-icon name="pen"></ui-icon>Word Counter Plus</a>
   <nav><a href="#">Home</a><a class="on" href="#">Tools<ui-icon name="chevron"></ui-icon></a><a href="#">Extension</a><a href="#">About</a><a href="#">Contact</a><a href="#">Blog</a></nav><span></span></div>`);

const CARD = 'background:#fff;border:2px solid #e6e6e6;border-radius:28px;box-shadow:0 2px 7px rgba(0,0,0,.05);';

define('text-editor', `
  :host { display:block; ${CARD} padding:57px 52px 52px; }
  .head { display:flex; justify-content:space-between; align-items:center; height:53px; margin-bottom:31px; }
  h2 { font-size:41px; line-height:53px; font-weight:600; }
  .up { display:flex; align-items:center; gap:16px; height:53px; padding:0 18px; border-radius:8px; background:#c93045; color:#fff; font-size:28px; }
  textarea { display:block; width:100%; height:563px; resize:none; outline:0; border:2px solid #e4e4e4; border-radius:28px; background:#f4f4f4; padding:34px 35px; font:400 37px/54px Inter, sans-serif; }
  textarea::placeholder { color:#6b6b6b; opacity:1; }
  .acts { display:flex; gap:18px; margin-top:35px; }
  .acts button { display:flex; align-items:center; gap:10px; height:71px; padding:0 28px; border-radius:8px; background:#ebebeb; color:#8c8c8c; font-size:31px; }`,
  `<div class="head"><h2 id="t">Enter Your Text</h2><button class="up"><ui-icon name="upload"></ui-icon>Upload</button></div>
   <textarea aria-labelledby="t" placeholder="Type or paste your text here to start counting characters, words, and analyzing your content..."></textarea>
   <div class="acts"><button disabled><ui-icon name="copy"></ui-icon>Copy</button><button disabled><ui-icon name="eraser"></ui-icon>Clear</button><button disabled><ui-icon name="download"></ui-icon>Export</button></div>`);

define('stat-row', ':host { display:grid; grid-template-columns:repeat(4,1fr); gap:36px; }', '<slot></slot>');

define('stat-card', `
  :host { display:flex; align-items:center; gap:18px; height:222px; padding:0 52px; ${CARD} }
  .icon { width:36px; display:flex; justify-content:center; color:#c93045; font-size:35px; }
  .l { font-size:33px; line-height:42px; font-weight:500; color:#666; }
  .v { font-size:54px; line-height:70px; font-weight:600; }`,
  el => `<span class="icon"><ui-icon name="${el.getAttribute('icon')}"></ui-icon></span><div><div class="l">${el.getAttribute('label')}</div><div class="v"><slot></slot></div></div>`);

define('analysis-tabs', `
  :host { display:grid; grid-template-columns:repeat(4,1fr); padding:9px; }
  button { display:flex; justify-content:center; align-items:center; gap:18px; height:66px; font-size:32px; font-weight:500; color:#5c5c5c; border-radius:22px; }
  button.on { color:#1a1a1a; background:#f6f6f6; box-shadow:0 0 4px rgba(0,0,0,.05); }
  ui-icon { font-size:30px; } .sm { font-size:26px; }`,
  `<button class="on"><ui-icon name="eye" class="sm"></ui-icon>Detailed Stats</button><button><ui-icon name="globe"></ui-icon>Social Media</button><button><ui-icon name="tags" class="sm"></ui-icon>Keywords</button><button><ui-icon name="search"></ui-icon>SEO Analysis</button>`);

define('related-tools', `
  :host { display:block; ${CARD} padding:36px 34px 45px; }
  h2 { font-size:41px; line-height:58px; font-weight:600; padding-bottom:20px; border-bottom:2px solid #e6e6e6; }
  .items { display:grid; gap:27px; padding:36px 0; border-bottom:2px solid #e6e6e6; }
  .more { display:flex; justify-content:center; align-items:center; gap:10px; padding-top:36px; font-size:32px; line-height:60px; font-weight:500; color:#c93045; }
  .more ui-icon { font-size:25px; }`,
  `<h2>Related Tools</h2><div class="items"><slot></slot></div><a class="more" href="#">More Text Tools <ui-icon name="arrow"></ui-icon></a>`);

define('tool-link', `
  :host { display:block; }
  a { display:flex; align-items:center; gap:27px; padding:25px 28px; }
  .text { padding-top:4px; }
  .icon { width:88px; height:88px; border-radius:28px; display:grid; place-items:center; background:#f9e2e2; color:#cc3a32; font-size:40px; }
  .l { font-size:37px; line-height:50px; font-weight:500; } .s { font-size:28px; line-height:40px; color:#666; }`,
  el => `<a href="#"><span class="icon"><ui-icon name="${el.getAttribute('icon')}"></ui-icon></span><div class="text"><div class="l">${el.getAttribute('label')}</div><div class="s"><slot></slot></div></div></a>`);

define('mac-dock', `
  :host { display:flex; gap:28px; height:138px; padding:18px 19px; border:1px solid #2c2646; border-radius:36px;
    box-shadow:inset 0 0 0 2px rgba(255,255,255,.16), 0 0 90px 10px rgba(0,0,0,.24);
    background:linear-gradient(90deg,#71678f 0,#675c94 20%,#6d6295 28%,#54498f 42%,#4b4590 50%,#4d4792 60%,#544b92 66%,#4a4592 78%,#4b4591 88%,#6a5f98 100%); }`, '<slot></slot>');

define('dock-rule', ':host { display:block; width:2px; height:100px; margin:0 11px; background:rgba(180,170,240,.55); }', '');

define('dock-app', `
  :host { display:flex; flex-direction:column; align-items:center; width:86px; padding-top:2px; position:relative; filter:drop-shadow(0 2px 2px rgba(0,0,0,.25)); }
  .pic { width:86px; height:86px; display:flex; justify-content:center; }
  .pic ui-icon { font-size:86px; }
  :host([icon=trash]) .pic ui-icon { font-size:96px; margin-top:-8px; }
  .dot { flex:none; width:8px; height:8px; border-radius:50%; background:#e6dcff; margin-top:17px; }
  .badge { position:absolute; top:61px; left:-11px; width:106px; height:25px; border-radius:9px; background:rgba(46,114,44,.96); color:#fff; font-size:19px; line-height:25px; font-weight:700; text-align:center; }
  .prog { position:absolute; top:87px; left:-11px; width:106px; height:11px; border-radius:5px; border:1px solid #77738f; background:linear-gradient(90deg,#fff 15px,#2a2a2e 16px); }`,
  el => `<div class="pic"><ui-icon name="${el.getAttribute('icon')}"></ui-icon></div>${el.hasAttribute('running') ? '<i class="dot"></i>' : ''}${el.hasAttribute('badge') ? `<div class="badge">▼ ${el.getAttribute('badge')}</div><div class="prog"></div>` : ''}`);
</script>
</body>
</html>
